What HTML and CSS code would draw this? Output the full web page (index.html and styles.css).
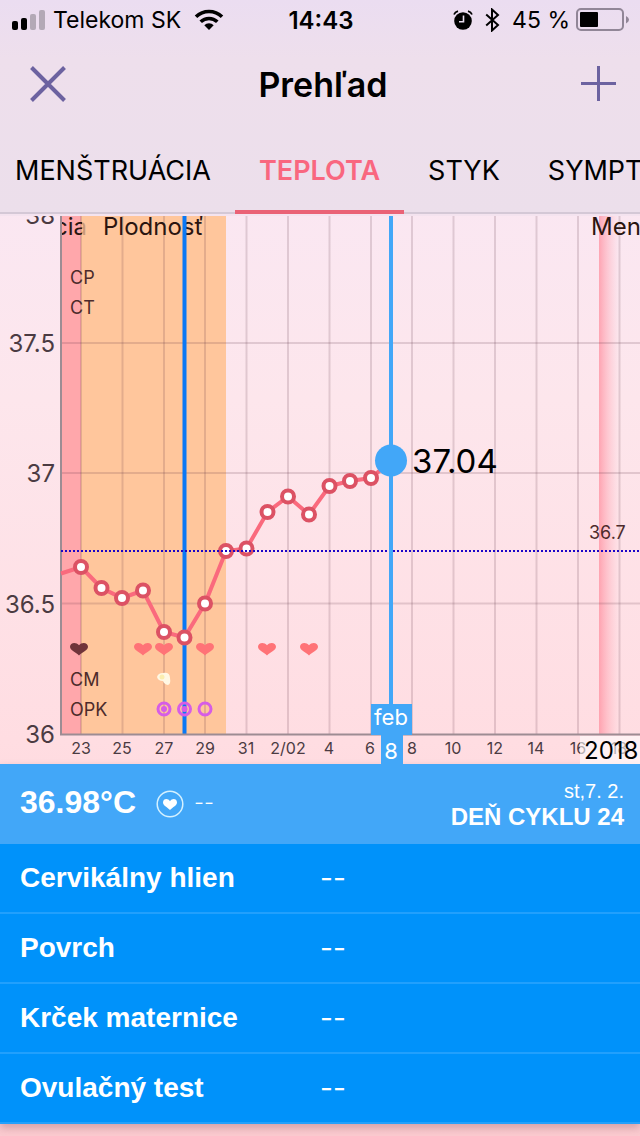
FILE: index.html
```html
<!DOCTYPE html>
<html lang="sk">
<head>
    <meta charset="UTF-8">
    <meta name="viewport" content="width=device-width, initial-scale=1.0">
    <title>Prehľad</title>
    <link rel="stylesheet" href="styles.css">
</head>
<body>
    <header class="header">
        <!-- Status bar -->
        <div class="status">
            <div class="status-left">
                <svg width="34" height="20" viewBox="0 0 34 20">
                    <rect x="0" y="11" width="6" height="9" rx="2"/>
                    <rect x="9" y="8" width="6" height="12" rx="2"/>
                    <rect x="18" y="4" width="6" height="16" rx="2" fill="#b3a9b6"/>
                    <rect x="27" y="0" width="6" height="20" rx="2" fill="#b3a9b6"/>
                </svg>
                <span class="carrier">Telekom SK</span>
                <svg class="wifi" width="30" height="22" viewBox="0 0 30 22">
                    <g fill="none" stroke="#000" stroke-width="3.6">
                        <path d="M2 7.8a18.6 18.6 0 0 1 26 0"/>
                        <path d="M6.7 12.8a12 12 0 0 1 16.6 0"/>
                    </g>
                    <path d="M15 21l-4.700-4.800a6.600 6.600 0 0 1 9.400 0z"/>
                </svg>
            </div>
            <span class="clock">14:43</span>
            <div class="status-right">
                <svg width="20" height="20" viewBox="0 0 20 20">
                    <circle cx="10" cy="11" r="8.800"/>
                    <path d="M1 4.500Q2 2 5 1.200M19 4.500Q18 2 15 1.200" fill="none" stroke="#000" stroke-width="1.800"/>
                    <path d="M10.500 5.500v6.200H6" fill="none" stroke="#eadff0" stroke-width="1.600"/>
                </svg>
                <svg class="bluetooth" width="15" height="24" viewBox="0 0 15 24">
                    <path d="M1.200 6.500L13 17l-6 5.500v-21L13 7 1.200 17.500" fill="none" stroke="#000" stroke-width="2"/>
                </svg>
                <span>45 %</span>
                <svg class="battery" width="54" height="24" viewBox="0 0 54 24">
                    <rect x="1" y="1" width="46" height="21" rx="4" fill="none" stroke="#918697" stroke-width="2"/>
                    <rect x="4" y="4" width="18" height="15" rx="1"/>
                    <path d="M50 8q6 3.500 0 7.500z" fill="#918697"/>
                </svg>
            </div>
        </div>

        <!-- Title bar -->
        <div class="titlebar">
            <button class="icon-btn" aria-label="Zavrieť">
                <svg width="36" height="36" viewBox="0 0 36 36"><path d="M1.500 1.500l33 33M34.500 1.500l-33 33"/></svg>
            </button>
            <h1>Prehľad</h1>
            <button class="icon-btn" aria-label="Pridať">
                <svg class="plus" width="36" height="36" viewBox="0 0 36 36"><path d="M18.500 0v35M1 17.500h35"/></svg>
            </button>
        </div>

        <nav class="tabs">
            <button class="tab">MENŠTRUÁCIA</button>
            <button class="tab active">TEPLOTA</button>
            <button class="tab">STYK</button>
            <button class="tab">SYMPT</button>
        </nav>
    </header>

    <main>
        <!-- Temperature chart -->
        <svg class="chart" viewBox="0 0 640 548">
            <defs>
                <linearGradient id="period">
                    <stop offset="0" stop-color="#ff8e9e" stop-opacity=".75"/>
                    <stop offset=".4" stop-color="#ff9eac" stop-opacity=".45"/>
                    <stop offset="1" stop-color="#ffb4c0" stop-opacity="0"/>
                </linearGradient>
                <clipPath id="plot"><rect x="61" y="0" width="579" height="548"/></clipPath>
                <path id="heart" d="M0 6.500C-3 3.500-9 1.500-9-2.200C-9-6.500-3-7.500 0-3.800C3-7.500 9-6.500 9-2.200C9 1.500 3 3.500 0 6.500z"/>
            </defs>

            <rect x="61" y="0" width="20" height="518" fill="#ffa7ab"/>
            <rect x="81" y="0" width="145" height="518" fill="#ffc69c"/>
            <rect x="599" y="0" width="20" height="518" fill="url(#period)"/>

            <path class="grid" d="M81 0V518M122.500 0V518M164 0V518M205 0V518M246.500 0V518M288 0V518M329.500 0V518M371 0V518M412 0V518M453.500 0V518M495 0V518M536.500 0V518M578 0V518M619.500 0V518"/>
            <path class="grid" d="M61 127H640M61 257H640M61 387.500H640"/>

            <g class="phase" clip-path="url(#plot)">
                <text x="87" y="19" text-anchor="end">cia</text>
                <text x="103" y="19">Plodnosť</text>
                <text x="591" y="19">Men</text>
            </g>
            <!-- the next phase fades the end of the previous label -->
            <rect x="82" y="4" width="6" height="18" fill="#ffc69c" fill-opacity=".75"/>

            <g class="row-label">
                <text x="70" y="68">CP</text>
                <text x="70" y="98">CT</text>
                <text x="70" y="470">CM</text>
                <text x="70" y="500">OPK</text>
                <text x="589" y="323">36.7</text>
            </g>

            <path class="ovulation" d="M184.500 0V518"/>
            <path class="axis" d="M61 0V518.500H640"/>

            <!-- Temperature curve -->
            <path class="curve" d="M61 357.500L81 351L101.500 372L122 382L143 374.500L164 416L184.500 421.500L205 387.500L226 335L246.500 332.500L267.500 296L288 280.500L309 298.500L329.500 270L350 265L371 262L391 245"/>
            <g class="points">
                <circle cx="81" cy="351" r="6"/>
                <circle cx="101.500" cy="372" r="6"/>
                <circle cx="122" cy="382" r="6"/>
                <circle cx="143" cy="374.500" r="6"/>
                <circle cx="164" cy="416" r="6"/>
                <circle cx="184.500" cy="421.500" r="6"/>
                <circle cx="205" cy="387.500" r="6"/>
                <circle cx="226" cy="335" r="6"/>
                <circle cx="246.500" cy="332.500" r="6"/>
                <circle cx="267.500" cy="296" r="6"/>
                <circle cx="288" cy="280.500" r="6"/>
                <circle cx="309" cy="298.500" r="6"/>
                <circle cx="329.500" cy="270" r="6"/>
                <circle cx="350" cy="265" r="6"/>
                <circle cx="371" cy="262" r="6"/>
            </g>
            <path class="coverline" d="M61 335H640"/>

            <g fill="#ff7377">
                <use href="#heart" x="79" y="433" fill="#70343a"/>
                <use href="#heart" x="143" y="433"/>
                <use href="#heart" x="164" y="433"/>
                <use href="#heart" x="205" y="433"/>
                <use href="#heart" x="267" y="433"/>
                <use href="#heart" x="309" y="433"/>
            </g>

            <!-- Cervical mucus -->
            <path d="M157 461q1-4 6-4q7-1 7 5q1 6-2 7q-4-1-5-4q-5 0-6-4z" fill="#fff8e4"/>
            <circle cx="162" cy="461" r="2.500" fill="#fbeeb0"/>

            <!-- Ovulation tests -->
            <g class="opk">
                <circle cx="164" cy="493" r="6"/>
                <circle cx="184.500" cy="493" r="6"/>
                <circle cx="205" cy="493" r="6"/>
                <circle class="dot" cx="164" cy="493" r="3"/>
                <circle class="dot" cx="184.500" cy="493" r="3"/>
            </g>

            <g class="scale-y">
                <text x="55" y="8">38</text>
                <text x="55" y="136">37.5</text>
                <text x="55" y="266">37</text>
                <text x="55" y="397">36.5</text>
                <text x="55" y="527">36</text>
            </g>
            <g class="scale-x">
                <text x="81" y="538">23</text>
                <text x="122" y="538">25</text>
                <text x="164" y="538">27</text>
                <text x="205" y="538">29</text>
                <text x="246" y="538">31</text>
                <text x="288" y="538">2/02</text>
                <text x="329" y="538">4</text>
                <text x="370" y="538">6</text>
                <text x="412" y="538">8</text>
                <text x="453" y="538">10</text>
                <text x="495" y="538">12</text>
                <text x="536" y="538">14</text>
                <text x="578" y="538">16</text>
                <text x="619" y="538">18</text>
            </g>
            <rect x="580" y="520" width="60" height="28" fill="#fff" fill-opacity=".6"/>
            <text class="year" x="584" y="543">2018</text>

            <!-- Selected day -->
            <g fill="#42a7f8">
                <rect x="389" y="0" width="4" height="490"/>
                <circle cx="391" cy="244.500" r="16"/>
                <rect x="371" y="488" width="41" height="31"/>
                <rect x="381" y="518" width="22" height="30"/>
            </g>
            <text class="value" x="412" y="257">37.04</text>
            <g class="day">
                <text x="391" y="509">feb</text>
                <text x="391" y="543">8</text>
            </g>
        </svg>

        <!-- Day details -->
        <section class="details">
            <div class="summary">
                <strong class="temperature">36.98°C</strong>
                <svg width="28" height="28" viewBox="0 0 28 28">
                    <circle cx="14" cy="14" r="12.800" fill="none" stroke="#d4f1ff" stroke-width="1.500"/>
                    <path d="M14 20C11 17 7 15.500 7 12.500C7 8.500 12 8 14 11.200C16 8 21 8.500 21 12.500C21 15.500 17 17 14 20z" fill="#fff"/>
                </svg>
                <span class="empty">--</span>
                <div class="cycle">
                    <span class="date">st,7. 2.</span>
                    <strong>DEŇ CYKLU 24</strong>
                </div>
            </div>
            <table>
                <tr><th scope="row">Cervikálny hlien</th><td>--</td></tr>
                <tr><th scope="row">Povrch</th><td>--</td></tr>
                <tr><th scope="row">Krček maternice</th><td>--</td></tr>
                <tr><th scope="row">Ovulačný test</th><td>--</td></tr>
            </table>
        </section>
    </main>
</body>
</html>
```

FILE: styles.css
```css
body {
    margin: 0;
    font-family: Inter, "Liberation Sans", sans-serif;
    color: #000;
    min-height: 100vh;
    background: linear-gradient(#fae7f2 200px, #fde6ec 400px, #ffdde2 740px, #fbcbd0 1136px);
    overflow-x: hidden;
}

svg {
    display: block;
    flex-shrink: 0;
}

button {
    border: 0;
    padding: 0;
    background: none;
    font-family: inherit;
    color: inherit;
    cursor: pointer;
}

.header {
    background: linear-gradient(#ebddf1, #eedfec 60px, #ecdfeb);
    border-bottom: 2px solid #f4e3ef;
}

.status {
    display: grid;
    grid-template-columns: 1fr auto 1fr;
    align-items: center;
    height: 40px;
    padding: 0 10px 0 12px;
    font-size: 23px;
}

.status-left,
.status-right {
    display: flex;
    align-items: center;
}

.status-right {
    justify-content: flex-end;
}

.carrier {
    margin-left: 7px;
}

.wifi {
    margin-left: 13px;
}

.clock {
    font-size: 24px;
    font-weight: 600;
}

.bluetooth {
    margin: 0 12px 0 12px;
}

.battery {
    margin-left: 6px;
}

.titlebar {
    display: flex;
    align-items: center;
    justify-content: space-between;
    height: 88px;
    padding: 0 24px 0 30px;
}

h1 {
    margin: 0;
    font-size: 34px;
    font-weight: 600;
}

.icon-btn path {
    fill: none;
    stroke: #6c62a0;
    stroke-width: 4;
}

.icon-btn .plus path {
    stroke-width: 3;
}

.tabs {
    display: flex;
    height: 86px;
    overflow: hidden;
    background: linear-gradient(#d4c8d6, #d4c8d6) bottom / 100% 2px no-repeat;
}

.tab {
    flex-shrink: 0;
    padding: 2px 24px 0;
    font-size: 27px;
    border-bottom: 4px solid transparent;
}

.tab:first-child {
    padding-left: 15px;
}

.tab.active {
    color: #f9677f;
    font-weight: 600;
    border-bottom-color: #ea6276;
}

/* Chart */
.chart {
    width: 100%;
    height: auto;
}

.grid {
    stroke: #5a3040;
    stroke-opacity: .17;
    stroke-width: 2;
}

.axis {
    fill: none;
    stroke: #9d8c93;
    stroke-width: 2;
}

.phase {
    font-size: 24px;
    fill: #2b1510;
}

.row-label {
    font-size: 18px;
    fill: #4d2b2b;
}

.ovulation {
    stroke: #0a78f5;
    stroke-width: 4;
}

.curve {
    fill: none;
    stroke: #fa6a7d;
    stroke-width: 4;
}

.points circle {
    fill: #fff;
    stroke: #dc5264;
    stroke-width: 4;
}

.coverline {
    stroke: #1c04c8;
    stroke-width: 2;
    stroke-dasharray: 2 2;
}

.opk circle {
    fill: none;
    stroke: #d65de6;
    stroke-width: 3;
}

.opk .dot {
    fill: #d65de6;
    stroke: none;
}

.scale-y {
    font-size: 24px;
    fill: #4b3b42;
    text-anchor: end;
}

.scale-x {
    font-size: 16px;
    fill: #4b3b42;
    text-anchor: middle;
}

.year {
    font-size: 24px;
}

.value {
    font-size: 33px;
}

.day {
    font-size: 22px;
    fill: #fff;
    text-anchor: middle;
}

/* Details */
.details {
    font-family: "Liberation Sans", Arial, sans-serif;
    color: #fff;
    background: #0092fa;
    box-shadow: 0 4px 8px rgba(120, 60, 70, .3);
}

.summary {
    display: flex;
    align-items: center;
    height: 80px;
    padding: 0 16px 0 20px;
    background: #42a7f8;
}

.temperature {
    margin-right: 20px;
    padding-bottom: 4px;
    font-size: 32px;
}

.empty {
    margin-left: 10px;
    padding-bottom: 4px;
    font-family: Inter, sans-serif;
    font-size: 22px;
    font-weight: 300;
}

.cycle {
    display: flex;
    flex-direction: column;
    margin-left: auto;
    text-align: right;
    font-size: 24px;
    line-height: 25px;
}

.date {
    font-size: 20px;
}

table {
    width: 100%;
    border-collapse: collapse;
}

th,
td {
    width: 50%;
    height: 68px;
    padding: 0;
    border-bottom: 2px solid #22a0fc;
    text-align: left;
    font-size: 28px;
}

th {
    box-sizing: border-box;
    padding-left: 20px;
}

td {
    font-family: Inter, sans-serif;
    font-weight: 400;
}
```
